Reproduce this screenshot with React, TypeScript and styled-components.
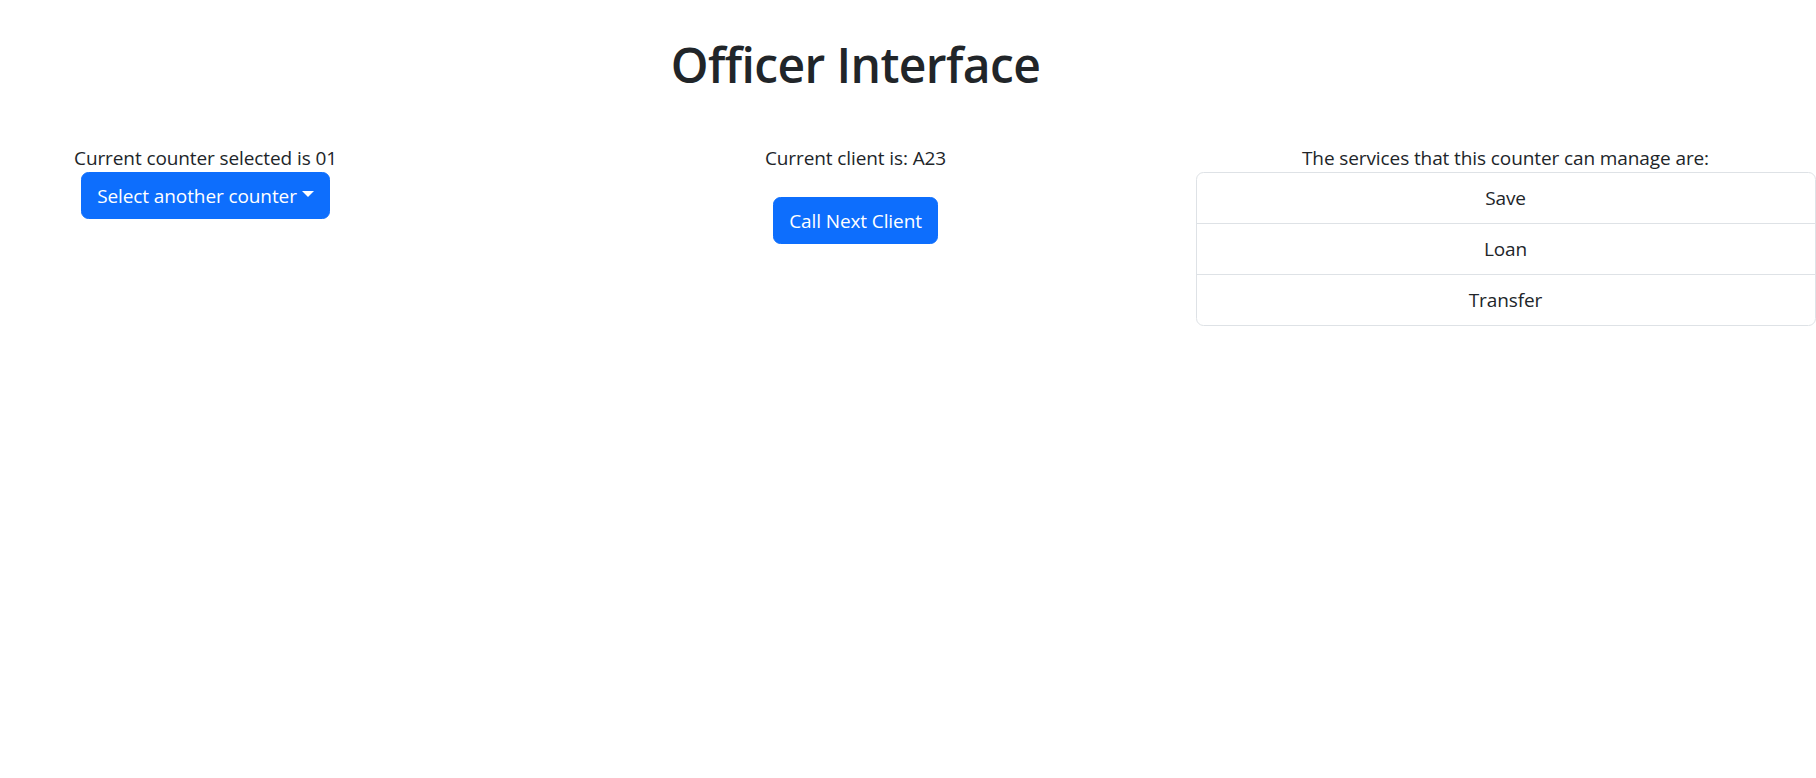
import * as React from 'react';
import styled, { createGlobalStyle } from 'styled-components';

const services = ['Save', 'Loan', 'Transfer'];

const GlobalStyle = createGlobalStyle`
  html, body {
    margin: 0;
    padding: 0;
    overflow: hidden;
    background: #fff;
  }
  body {
    font-family: "Open Sans", "Noto Sans", sans-serif;
    font-size: 19px;
    line-height: 30px;
    color: #212529;
  }
`;

const Page = styled.div`
  width: 1950px;
  margin-left: -119.5px;
  padding-top: 35px;
`;

const Title = styled.h1`
  margin: 0 0 47px;
  text-align: center;
  font-size: 48px;
  line-height: 60px;
  font-weight: 600;
  letter-spacing: -0.6px;
`;

const Row = styled.div`
  display: grid;
  grid-template-columns: repeat(3, 650px);
`;

const Column = styled.div`
  padding: 0 15px;
  display: flex;
  flex-direction: column;
  align-items: center;
  text-align: center;
`;

const Label = styled.div`
  padding-top: 3px;
  font-size: 19px;
  line-height: 27px;
  letter-spacing: -0.1px;
`;

const Button = styled.button<{ $gap?: number }>`
  margin-top: ${(p) => p.$gap || 0}px;
  font-family: inherit;
  font-size: 19px;
  line-height: 30px;
  letter-spacing: -0.1px;
  color: #fff;
  background-color: #0d6efd;
  border: 1.25px solid #0d6efd;
  border-radius: 7.5px;
  padding: 7.5px 15px;
  cursor: pointer;
  display: inline-flex;
  align-items: center;
`;

const Caret = styled.span`
  display: inline-block;
  margin-left: 5px;
  margin-bottom: 3px;
  border-top: 6px solid #fff;
  border-left: 6px solid transparent;
  border-right: 6px solid transparent;
`;

const ListGroup = styled.ul`
  align-self: stretch;
  margin: 0;
  padding: 0;
  list-style: none;
  border: 1.25px solid #dee2e6;
  border-radius: 7.5px;
`;

const ListItem = styled.li`
  padding: 10px 20px;
  font-size: 19px;
  line-height: 30px;
  letter-spacing: -0.1px;
  & + & {
    border-top: 1.25px solid #dee2e6;
  }
`;

export default function App() {
  return (
    <>
      <GlobalStyle />
      <Page>
        <Title>Officer Interface</Title>
        <Row>
          <Column>
            <Label>Current counter selected is 01</Label>
            <Button>
              Select another counter
              <Caret />
            </Button>
          </Column>
          <Column>
            <Label>Current client is: A23</Label>
            <Button $gap={25}>Call Next Client</Button>
          </Column>
          <Column>
            <Label>The services that this counter can manage are:</Label>
            <ListGroup>
              {services.map((s) => (
                <ListItem key={s}>{s}</ListItem>
              ))}
            </ListGroup>
          </Column>
        </Row>
      </Page>
    </>
  );
}
